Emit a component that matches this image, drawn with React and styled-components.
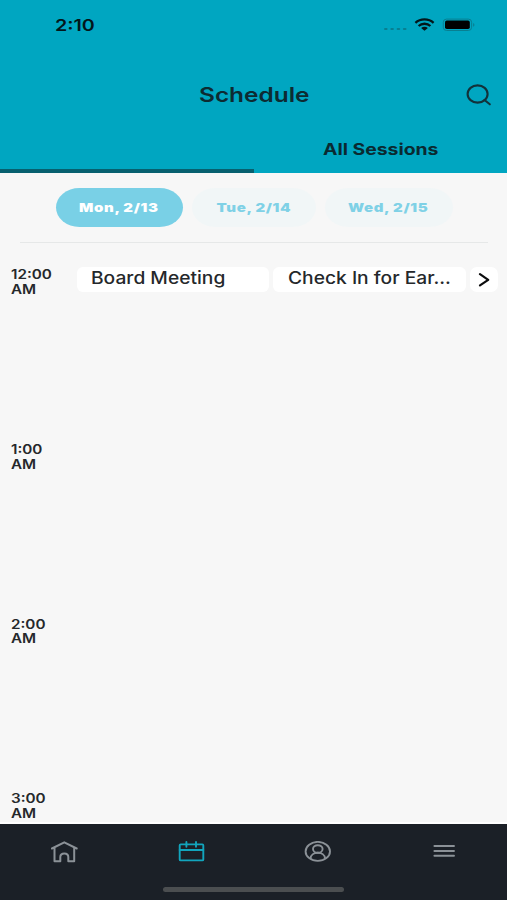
import React, { useState } from "react"
import styled, { createGlobalStyle } from "styled-components"

const days = ["Mon, 2/13", "Tue, 2/14", "Wed, 2/15"]

const hours = [
    { time: "12:00", sessions: ["Board Meeting", "Check In for Ear..."] },
    { time: "1:00", sessions: [] },
    { time: "2:00", sessions: [] },
    { time: "3:00", sessions: [] },
]

export default function App() {
    const [day, setDay] = useState(0)

    return (
        <>
            <GlobalStyle />
            <Screen>
                <Header>
                    <StatusBar>
                        <Clock><Wide $x={1.23}>2:10</Wide></Clock>
                        <StatusIcons />
                    </StatusBar>
                    <TitleBar>
                        <span />
                        <Title><Wide $x={1.22} $origin="center">Schedule</Wide></Title>
                        <SearchButton aria-label="Search">
                            <svg width="26" height="22" viewBox="0 0 26 22" fill="none" stroke="#12323a" strokeWidth="2.1">
                                <ellipse cx="11.6" cy="10" rx="10" ry="8.6" />
                                <path d="M18.5 16l5.3 4.3" strokeLinecap="round" />
                            </svg>
                        </SearchButton>
                    </TitleBar>
                    <Tabs>
                        <Tab $active />
                        <Tab><Wide $x={1.21} $origin="center">All Sessions</Wide></Tab>
                    </Tabs>
                </Header>
                <Days>
                    {days.map((d, index) => (
                        <Day key={d} $active={index === day} $width={[127, 124, 128][index]} onClick={() => setDay(index)}>
                            <Wide $x={1.25} $origin="center">{d}</Wide>
                        </Day>
                    ))}
                </Days>
                <Divider />
                <Agenda>
                    {hours.map((h) => (
                        <Hour key={h.time}>
                            <Time><Wide $x={1.22}>{h.time}<br />AM</Wide></Time>
                            {h.sessions.length > 0 &&
                                <Sessions>
                                    {h.sessions.map((s) => (
                                        <Session key={s}><Wide $x={1.13}>{s}</Wide></Session>
                                    ))}
                                    <More aria-label="More sessions">
                                        <svg width="12" height="14" viewBox="0 0 12 14" fill="none" stroke="#0c0d0e" strokeWidth="2.2" strokeLinecap="round" strokeLinejoin="round">
                                            <path d="M2 1.2L10.200 6.800 2 12.400" />
                                        </svg>
                                    </More>
                                </Sessions>}
                        </Hour>
                    ))}
                </Agenda>
                <NavBar>
                    <NavItems>
                        <NavItem>
                            <svg width="28" height="22" viewBox="0 0 28 22" fill="none" stroke="currentColor" strokeWidth="2" strokeLinecap="round" strokeLinejoin="round">
                                <path d="M.9 7.500L13.300 1.300l12.400 6.200M3.500 7v13.300h5.800V16c0-4.700 8-4.700 8 0v4.300h5.900V7" />
                            </svg>
                        </NavItem>
                        <NavItem $active>
                            <svg width="28" height="22" viewBox="0 0 28 22" fill="none" stroke="currentColor" strokeWidth="1.9" strokeLinecap="round" strokeLinejoin="round">
                                <rect x="2.7" y="3.4" width="23.6" height="16" rx="1" />
                                <path d="M2.7 9h23.6M9.4 1v4.7M19 1v4.7" />
                            </svg>
                        </NavItem>
                        <NavItem>
                            <svg width="28" height="22" viewBox="0 0 28 22" fill="none" stroke="currentColor" strokeWidth="1.9">
                                <ellipse cx="13.8" cy="10.4" rx="12.2" ry="9.5" />
                                <ellipse cx="13.8" cy="8" rx="4.8" ry="3.8" />
                                <path d="M6.500 17.800c.3-8 14.300-8 14.600 0" />
                            </svg>
                        </NavItem>
                        <NavItem>
                            <svg width="28" height="22" viewBox="0 0 28 22" fill="none" stroke="currentColor" strokeWidth="1.9" strokeLinecap="round">
                                <path d="M4.4 5h19.6M4.4 10h19.6M4.4 14.800h19.600" />
                            </svg>
                        </NavItem>
                    </NavItems>
                    <HomeBar />
                </NavBar>
            </Screen>
        </>
    )
}

function StatusIcons() {
    return (
        <svg width="92" height="16" viewBox="0 0 92 16" fill="none">
            <g fill="#087f91">
                <rect x="0" y="11" width="3.6" height="2" rx="1" />
                <rect x="6.3" y="11" width="3.6" height="2" rx="1" />
                <rect x="12.6" y="11" width="3.6" height="2" rx="1" />
                <rect x="18.9" y="11" width="3.6" height="2" rx="1" />
            </g>
            <g stroke="#03171b" strokeWidth="2.3">
                <path d="M31.4 5.8c5-4.5 13.2-4.5 18.2 0" />
                <path d="M34.6 9c3.3-3 8.5-3 11.8 0" />
            </g>
            <path d="M37.1 10.9c2-1.7 4.8-1.7 6.8 0L40.5 13.8z" fill="#03171b" />
            <rect x="59.3" y="2.1" width="28.3" height="11.4" rx="3.2" stroke="#087f91" />
            <rect x="61" y="3.6" width="24.8" height="8.5" rx="1.8" fill="#000" />
            <path d="M89.1 5.9c1.8.6 1.8 3.2 0 3.8z" fill="#087f91" />
        </svg>
    )
}

const GlobalStyle = createGlobalStyle`
    *{
        box-sizing: border-box;
    }
    body{
        margin: 0;
        font-family: Inter, "Liberation Sans", sans-serif;
        color: #25282b;
    }
    button{
        border: 0;
        padding: 0;
        background: none;
        font: inherit;
        color: inherit;
    }
    svg{
        display: block;
    }
`

const Screen = styled.div`
    width: 507px;
    height: 900px;
    display: flex;
    flex-direction: column;
    overflow: hidden;
    background-color: #f7f7f7;
`

const Wide = styled.span`
    display: inline-block;
    white-space: nowrap;
    transform: scaleX(${({ $x }) => $x});
    transform-origin: ${({ $origin }) => $origin || "left"};
`

const Header = styled.div`
    height: 173px;
    flex-shrink: 0;
    display: flex;
    flex-direction: column;
    background-color: #00a6c1;
`

const StatusBar = styled.div`
    height: 49px;
    padding: 0 31px 0 55px;
    display: flex;
    justify-content: space-between;
    align-items: center;
`

const Clock = styled.div`
    font-size: 16px;
    font-weight: 600;
    color: #03171b;
`

const TitleBar = styled.div`
    height: 91px;
    padding-right: 15px;
    display: grid;
    grid-template-columns: 42px 1fr 26px;
    align-items: center;
`

const Title = styled.h1`
    margin: 0;
    padding-top: 1px;
    font-size: 20px;
    font-weight: 600;
    text-align: center;
    color: #0d2b32;
`

const SearchButton = styled.button`
    width: 26px;
`

const Tabs = styled.div`
    flex: 1;
    display: grid;
    grid-template-columns: 1fr 1fr;
`

const Tab = styled.div`
    border-bottom: 4px solid ${({ $active }) => $active ? "#07606f" : "transparent"};
    font-size: 16px;
    font-weight: 700;
    line-height: 18px;
    text-align: center;
    color: #0a2a31;
`

const Days = styled.div`
    height: 69px;
    flex-shrink: 0;
    padding: 15px 54px 0 56px;
    display: flex;
    justify-content: space-between;
`

const Day = styled.button`
    width: ${({ $width }) => $width}px;
    height: 39px;
    padding-right: 1px;
    border-radius: 24px / 20px;
    background-color: ${({ $active }) => $active ? "#79d0e6" : "#f1f6f7"};
    color: ${({ $active }) => $active ? "#fff" : "#7fd1e6"};
    font-size: 12px;
    font-weight: 900;
    letter-spacing: 0.5px;
`

const Divider = styled.div`
    height: 1px;
    flex-shrink: 0;
    margin: 0 19px 0 20px;
    background-color: #e6e8e8;
`

const Agenda = styled.div`
    flex: 1;
    overflow: hidden;
    padding-top: 24px;
    border-bottom: 2px solid #fff;
`

const Hour = styled.div`
    height: 174.8px;
    padding-left: 10.5px;
    display: flex;
    align-items: flex-start;
`

const Time = styled.div`
    width: 66px;
    padding-top: 1px;
    font-size: 12.5px;
    font-weight: 600;
    line-height: 14.7px;
`

const Sessions = styled.div`
    display: flex;
    gap: 4px;
`

const Session = styled.div`
    width: 192.5px;
    height: 25px;
    padding-left: 14.5px;
    border-radius: 6px;
    background-color: #fff;
    overflow: hidden;
    font-size: 17px;
    font-weight: 500;
    line-height: 22px;
`

const More = styled.button`
    width: 28px;
    height: 25px;
    border-radius: 7px;
    background-color: #fff;
    display: flex;
    justify-content: center;
    align-items: center;
`

const NavBar = styled.div`
    height: 76px;
    flex-shrink: 0;
    padding: 17px 0 8px;
    display: flex;
    flex-direction: column;
    justify-content: space-between;
    align-items: center;
    background-color: #1b2027;
`

const NavItems = styled.div`
    width: 100%;
    padding-left: 2px;
    display: grid;
    grid-template-columns: repeat(4, 1fr);
`

const NavItem = styled.button`
    display: flex;
    justify-content: center;
    color: ${({ $active }) => $active ? "#12a5bd" : "#8b9197"};
`

const HomeBar = styled.div`
    width: 181px;
    height: 5px;
    border-radius: 3px;
    background-color: #4b4e50;
`
